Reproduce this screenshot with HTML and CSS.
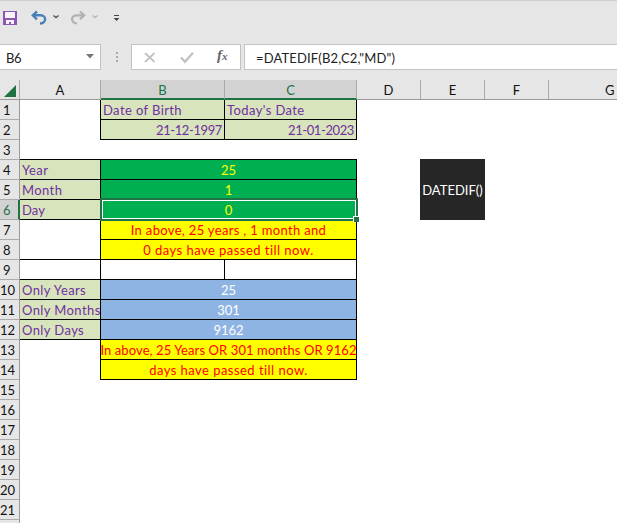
FILE: index.html
```html
<!DOCTYPE html>
<html lang="en">
<head>
<meta charset="utf-8">
<title>Spreadsheet</title>
<link rel="stylesheet" href="styles.css">
</head>
<body>
<header class="quickbar">
  <svg width="130" height="32" viewBox="0 0 130 32" fill="none">
    <path d="M3 11h14v14H3z" fill="#8b55b0"/>
    <path d="M5 12h10v6H5zM6 20h8v4h-3v-2H9v2H6z" fill="#f8f2fc"/>
    <path d="M37 11.500 32.800 15.300l4.200 4M33.500 15.300h7.200c6 0 6 7.800-.7 8.200" stroke="#4a80b8" stroke-width="2.400"/>
    <path d="M53.500 15.500 56 17.600l2.500-2.100" stroke="#555" stroke-width="1.500"/>
    <path d="m80 11.500 4.200 3.800-4.200 4M83.500 15.300h-7c-6 0-6 7.800.5 8.200" stroke="#b1b1b1" stroke-width="2.200"/>
    <path d="m92.500 15.500 2.500 2.100 2.500-2.100" stroke="#b8b8b8" stroke-width="1.300"/>
    <path d="M114 15.500h5" stroke="#444" stroke-width="1"/>
    <path d="M113.700 18h5.600l-2.800 3z" fill="#444"/>
  </svg>
</header>
<section class="formulabar">
  <div class="namebox"><span>B6</span><svg width="8" height="5"><path d="M0 0h8L4 4.500z" fill="#777"/></svg></div>
  <svg class="grip" width="4" height="12"><path d="M1 1h2v2H1zM1 5h2v2H1zM1 9h2v2H1z" fill="#aaa"/></svg>
  <div class="tools">
    <svg width="107" height="24" fill="none">
      <path d="m13 8 9.500 9M22.500 8 13 17" stroke="#c2c2c2" stroke-width="1.800"/>
      <path d="m49 12.500 4 4.200 8-9" stroke="#c2c2c2" stroke-width="2.400"/>
    </svg>
    <span class="fx">f<small>x</small></span>
  </div>
  <div class="formula">=DATEDIF(B2,C2,"MD")</div>
</section>
<main class="sheet">
  <div class="head corner"><svg width="12" height="12"><path d="M12 0v12H0z" fill="#217346"/></svg></div>
  <div class="head">A</div><div class="head on">B</div><div class="head on">C</div><div class="head">D</div><div class="head">E</div><div class="head">F</div><div class="head last">G</div>

  <div class="num">1</div><div class="cell r"></div><div class="cell label r b"><span>Date of Birth</span></div><div class="cell label r b"><span>Today's Date</span></div><div class="rest"></div>
  <div class="num">2</div><div class="cell r"></div><div class="cell label end r b"><span>21-12-1997</span></div><div class="cell label end r b"><span>21-01-2023</span></div><div class="rest"></div>
  <div class="num">3</div><div class="cell b"></div><div class="cell wide b"></div><div class="rest"></div>
  <div class="num">4</div><div class="cell label r b"><span>Year</span></div><div class="cell wide green r b"><span>25</span></div><div class="rest"><div class="func">DATEDIF()</div></div>
  <div class="num">5</div><div class="cell label r b"><span>Month</span></div><div class="cell wide green r b"><span>1</span></div><div class="rest"></div>
  <div class="num on">6</div><div class="cell label r b"><span class="day">Day</span></div><div class="cell wide green r b"><span>0</span><i class="selection"></i><i class="handle"></i></div><div class="rest"></div>
  <div class="num">7</div><div class="cell r"></div><div class="cell wide yellow r b"><span>In above, 25 years , 1 month and</span></div><div class="rest"></div>
  <div class="num">8</div><div class="cell r b"></div><div class="cell wide yellow r b"><span class="loose">0 days have passed till now.</span></div><div class="rest"></div>
  <div class="num">9</div><div class="cell r b"></div><div class="cell r b"></div><div class="cell r b"></div><div class="rest"></div>
  <div class="num two">10</div><div class="cell label r b"><span>Only Years</span></div><div class="cell wide blue r b"><span>25</span></div><div class="rest"></div>
  <div class="num two">11</div><div class="cell label r b"><span>Only Months</span></div><div class="cell wide blue r b"><span>301</span></div><div class="rest"></div>
  <div class="num two">12</div><div class="cell label r b"><span>Only Days</span></div><div class="cell wide blue r b"><span>9162</span></div><div class="rest"></div>
  <div class="num two">13</div><div class="cell r"></div><div class="cell wide yellow r b"><span class="tight">In above, 25 Years OR 301 months OR 9162</span></div><div class="rest"></div>
  <div class="num two">14</div><div class="cell r"></div><div class="cell wide yellow r b"><span class="loose">days have passed till now.</span></div><div class="rest"></div>
  <div class="num two">15</div><div class="row"></div>
  <div class="num two">16</div><div class="row"></div>
  <div class="num two">17</div><div class="row"></div>
  <div class="num two">18</div><div class="row"></div>
  <div class="num two">19</div><div class="row"></div>
  <div class="num two">20</div><div class="row"></div>
  <div class="num two">21</div><div class="row"></div>
  <div class="num"></div><div class="row"></div>
</main>
</body>
</html>
```
FILE: styles.css
```css
* { box-sizing: border-box; }
html { overflow: hidden; }
body { margin: 0; width: 617px; height: 523px; overflow: hidden; background: #e6e6e6; font: 13px/20px Lato, "Liberation Sans", sans-serif; font-variant-ligatures: none; color: #222; }
svg { display: block; }
.quickbar { height: 44px; border-top: 1px solid #cfcfcf; }
.quickbar svg { margin-top: -1px; }
.formulabar { display: flex; height: 36px; align-items: flex-start; }
.namebox, .tools, .formula { height: 26px; background: #fff; border: 1px solid #c3c3c3; }
.namebox { width: 101px; display: flex; align-items: center; justify-content: space-between; padding: 2px 6px 0 6px; border-left: 0; letter-spacing: -0.5px; }
.namebox svg { margin-top: -4px; }
.grip { margin: 7px 12px 0 14px; }
.tools { width: 110px; display: flex; position: relative; }
.fx { position: absolute; left: 85px; top: 0; font: italic bold 15px/21px "Liberation Serif", serif; color: #666; }
.fx small { font-size: 11px; }
.formula { flex: 1; margin-left: 3px; border-right: 0; padding: 3px 0 0 11px; letter-spacing: 0.15px; }
.sheet { display: grid; grid-template-columns: 20px 81px 124px 132px 64px 64px 64px 68px; grid-template-rows: repeat(22, 20px) 3px; width: 617px; height: 443px; overflow: hidden; background: #fff; }
.head, .num { background: #e6e6e6; border-right: 1px solid #ababab; border-bottom: 1px solid #ababab; text-align: center; color: #111; }
.head { border-bottom-color: #999; }
.num { border-right-color: #999; padding-left: 3px; text-align: left; white-space: nowrap; line-height: 21px; height: 20px; }
.num.two { padding-left: 0; }
.num:nth-last-child(2) { height: 3px; border-bottom: 0; }
.head.on { background: #d2d2d2; color: #217346; border-bottom: 2px solid #217346; }
.num.on { background: #d2d2d2; color: #217346; border-right: 2px solid #217346; }
.head.last { text-align: left; padding-left: 56px; border-right: 0; }
.corner svg { margin: 5px 0 0 4px; }
.cell { position: relative; display: flex; white-space: nowrap; line-height: 21px; min-width: 0; }
.cell span { flex: none; }
.r { border-right: 1px solid #000; }
.b { border-bottom: 1px solid #000; }
.wide { grid-column: 3 / 5; justify-content: center; }
.rest { grid-column: 5 / 9; min-height: 0; }
.row { grid-column: 2 / 9; }
.label { background: #d8e4bc; color: #7030a0; padding-left: 2px; letter-spacing: 0.4px; }
.label .day { letter-spacing: 0.1px; }
.end { justify-content: flex-end; padding-right: 2px; letter-spacing: -0.4px; }
.green { background: #00b050; color: #ff0; }
.yellow { background: #ff0; color: #f00; letter-spacing: 0.33px; }
.yellow .loose { letter-spacing: 0.46px; }
.yellow .tight { letter-spacing: 0.1px; }
.blue { background: #8eb4e3; color: #fff; }
.selection { position: absolute; inset: -2px -2px -2px -1px; border: 2px solid #217346; box-shadow: inset 0 0 0 1px #fff; z-index: 1; }
.handle { position: absolute; right: -3px; bottom: -3px; width: 6px; height: 6px; background: #217346; border: solid #fff; border-width: 1px 0 0 1px; z-index: 2; }
.func { width: 65px; height: 61px; margin: -1px 0 0 63px; background: #262626; color: #fff; display: flex; align-items: center; justify-content: center; }
```
